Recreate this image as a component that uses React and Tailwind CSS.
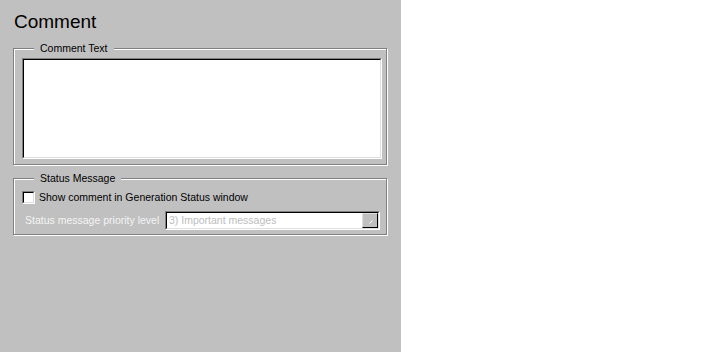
export default function App() {
  return (
    <div className="flex h-[352px] w-full bg-white font-['Liberation_Sans',Arial,sans-serif]">
      <div className="h-full w-[401px] bg-[#c0c0c0]">
        <h1 className="ml-[14px] mt-[12px] text-[19px] leading-[19px] text-black">Comment</h1>

        <fieldset className="ml-[13px] mt-[11px] w-[374px] border border-[#808080] pb-[5px] pl-[8px] pt-[3px] shadow-[1px_1px_0_#fff,inset_1px_1px_0_#fff]">
          <legend className="ml-[12px] bg-[#c0c0c0] px-[6px] text-[10.5px] leading-[13px] text-black">
            Comment Text
          </legend>
          <div className="h-[101px] w-[360px] border border-t-[#808080] border-l-[#808080] border-b-white border-r-white">
            <textarea className="block h-full w-full resize-none border border-t-black border-l-black border-b-[#dfdfdf] border-r-[#dfdfdf] bg-white outline-none" />
          </div>
        </fieldset>

        <fieldset className="ml-[13px] mt-[7px] w-[374px] border border-[#808080] pb-[4px] pl-[8px] pt-[4px] shadow-[1px_1px_0_#fff,inset_1px_1px_0_#fff]">
          <legend className="ml-[12px] bg-[#c0c0c0] px-[6px] text-[10.5px] leading-[13px] text-black">
            Status Message
          </legend>
          <label className="flex h-[17px] items-center gap-[4px] text-[10.5px] text-black">
            <span className="block h-[13px] w-[13px] border border-t-[#808080] border-l-[#808080] border-b-white border-r-white">
              <span className="block h-full w-full border border-t-black border-l-black border-b-[#dfdfdf] border-r-[#dfdfdf] bg-white" />
            </span>
            Show comment in Generation Status window
          </label>
          <div className="mt-[5px] flex items-center">
            <span className="w-[143px] whitespace-nowrap pl-[3px] text-[10.5px] text-[#f4f4f4]">Status message priority level</span>
            <div className="h-[19px] w-[215px] border border-t-[#808080] border-l-[#808080] border-b-white border-r-white">
              <div className="flex h-full w-full items-center border border-t-black border-l-black border-b-[#dfdfdf] border-r-[#dfdfdf] bg-white">
                <span className="flex-1 pl-[2px] text-[10.5px] text-[#bdbdbd]">3) Important messages</span>
                <span className="flex h-[15px] w-[16px] items-center justify-center border border-t-[#dfdfdf] border-l-[#dfdfdf] border-b-black border-r-black bg-[#c0c0c0]">
                  <svg width="14" height="13" viewBox="0 0 14 13" className="block">
                    <path d="M6.5 9.5 L9.5 6.5" stroke="#fff" strokeWidth="1" />
                  </svg>
                </span>
              </div>
            </div>
          </div>
        </fieldset>
      </div>
    </div>
  );
}
